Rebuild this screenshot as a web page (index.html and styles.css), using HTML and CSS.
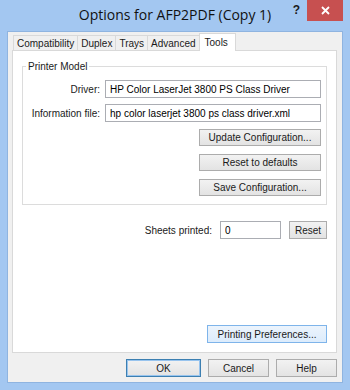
FILE: index.html
```html
<!DOCTYPE html>
<html>

<head>
    <link rel="stylesheet" href="styles.css">
</head>

<body>
    <div class="window">
        <div class="titlebar">
            <div class="title-spacer"></div>
            <div class="title">Options for AFP2PDF (Copy 1)</div>
            <div class="title-controls">
                <span class="help-glyph">?</span>
                <span class="close-btn">
                    <svg width="9" height="9" viewBox="0 0 9 9">
                        <path d="M1 1 L8 8 M8 1 L1 8" stroke="#fff" stroke-width="1.8" fill="none" />
                    </svg>
                </span>
            </div>
        </div>

        <div class="client">
            <div class="tabs">
                <span class="tab">Compatibility</span>
                <span class="tab">Duplex</span>
                <span class="tab">Trays</span>
                <span class="tab">Advanced</span>
                <span class="tab active">Tools</span>
            </div>

            <div class="panel">
                <fieldset class="group">
                    <legend>Printer Model</legend>
                    <div class="field-row">
                        <label class="field-label" for="driver">Driver:</label>
                        <input class="field" id="driver" type="text" value="HP Color LaserJet 3800 PS Class Driver">
                    </div>
                    <div class="field-row">
                        <label class="field-label" for="infoFile">Information file:</label>
                        <input class="field" id="infoFile" type="text" value="hp color laserjet 3800 ps class driver.xml">
                    </div>
                    <div class="group-buttons">
                        <button class="btn wide">Update Configuration...</button>
                        <button class="btn wide">Reset to defaults</button>
                        <button class="btn wide">Save Configuration...</button>
                    </div>
                </fieldset>

                <div class="sheets-row">
                    <label class="sheets-label" for="sheets">Sheets printed:</label>
                    <input class="field sheets" id="sheets" type="text" value="0">
                    <button class="btn reset">Reset</button>
                </div>

                <div class="panel-bottom">
                    <button class="btn prefs">Printing Preferences...</button>
                </div>
            </div>

            <div class="dialog-buttons">
                <button class="btn dlg default">OK</button>
                <button class="btn dlg">Cancel</button>
                <button class="btn dlg">Help</button>
                <span class="grip"></span>
            </div>
        </div>
    </div>
</body>

</html>
```

FILE: styles.css
```css
/* window frame */
body {
    margin: 0;
    font-family: "Liberation Sans", Arial, sans-serif;
    font-size: 10px;
    color: #1a1a1a;
}

.window {
    width: 350px;
    height: 390px;
    box-sizing: border-box;
    background-color: #a3c7f1;
    padding: 0 7px 7px 7px;
    display: flex;
    flex-direction: column;
}

.titlebar {
    height: 31px;
    display: flex;
    align-items: flex-start;
    margin: 0 -7px;
}

.title-spacer {
    width: 64px;
}

.title {
    flex: 1;
    text-align: center;
    font-family: "Open Sans", "Noto Sans", sans-serif;
    font-size: 14px;
    padding-top: 5px;
    color: #111;
}

.title-controls {
    width: 64px;
    display: flex;
    align-items: flex-start;
}

.help-glyph {
    width: 21px;
    text-align: center;
    font-weight: bold;
    font-size: 12px;
    padding-top: 3px;
}

.close-btn {
    width: 36px;
    height: 21px;
    background-color: #c75050;
    display: flex;
    align-items: center;
    justify-content: center;
}

/* dialog body */
.client {
    flex: 1;
    background-color: #f0f0f0;
    border: 1px solid #8fb4e0;
    display: flex;
    flex-direction: column;
    padding: 0 5px 5px 4px;
}

.tabs {
    display: flex;
    align-items: flex-end;
    height: 18px;
    padding-left: 1px;
    position: relative;
    z-index: 1;
}

.tab {
    height: 15px;
    box-sizing: border-box;
    border: 1px solid #d9d9d9;
    border-bottom: none;
    background-color: #f0f0f0;
    padding: 2px 3px 0 3px;
    margin-right: -1px;
    line-height: 12px;
}

.tab.active {
    height: 18px;
    background-color: #fff;
    padding-top: 3px;
    margin-bottom: -1px;
    padding-left: 5px;
    padding-right: 7px;
}

.panel {
    flex: 1;
    background-color: #fff;
    border: 1px solid #d9d9d9;
    display: flex;
    flex-direction: column;
    padding: 0 9px 9px 9px;
}

.group {
    margin: 10px 0 0 0;
    padding: 8px 5px 8px 0;
    border: 1px solid #dcdcdc;
    display: flex;
    flex-direction: column;
}

.group legend {
    padding: 0 2px;
    margin-left: 3px;
}

.field-row {
    display: flex;
    align-items: center;
    margin-bottom: 6px;
}

.field-label {
    width: 77px;
    text-align: right;
    margin-right: 5px;
}

.field {
    flex: 1;
    height: 18px;
    box-sizing: border-box;
    border: 1px solid #abadb3;
    font-family: "Liberation Sans", Arial, sans-serif;
    font-size: 10px;
    padding: 0 4px;
    color: #000;
}

.group-buttons {
    display: flex;
    flex-direction: column;
    align-items: flex-end;
    gap: 8px;
    margin-top: 1px;
}

.btn {
    height: 17px;
    box-sizing: border-box;
    border: 1px solid #acacac;
    background: linear-gradient(#f2f2f2, #e3e3e3);
    font-family: "Liberation Sans", Arial, sans-serif;
    font-size: 10px;
    color: #1a1a1a;
    padding: 0;
}

.wide {
    width: 122px;
}

.sheets-row {
    display: flex;
    align-items: center;
    justify-content: flex-end;
    margin-top: 16px;
}

.sheets-label {
    margin-right: 8px;
}

.field.sheets {
    flex: none;
    width: 61px;
}

.reset {
    width: 38px;
    height: 18px;
    margin-left: 8px;
}

.panel-bottom {
    flex: 1;
    display: flex;
    align-items: flex-end;
    justify-content: flex-end;
}

.prefs {
    width: 120px;
    height: 18px;
    border-color: #7eb4ea;
    background: linear-gradient(#ecf4fc, #dcecfc);
}

.dialog-buttons {
    display: flex;
    justify-content: flex-end;
    gap: 7px;
    margin-top: 6px;
    position: relative;
}

.dlg {
    width: 61px;
    height: 18px;
}

.dlg.default {
    width: 75px;
    border-color: #3c7fb1;
    box-shadow: inset 0 0 0 1px #98c4ee;
}

.grip {
    position: absolute;
    right: -4px;
    bottom: -3px;
    width: 6px;
    height: 6px;
    background-image: radial-gradient(#b8b8b8 45%, transparent 50%);
    background-size: 2px 2px;
}
```
